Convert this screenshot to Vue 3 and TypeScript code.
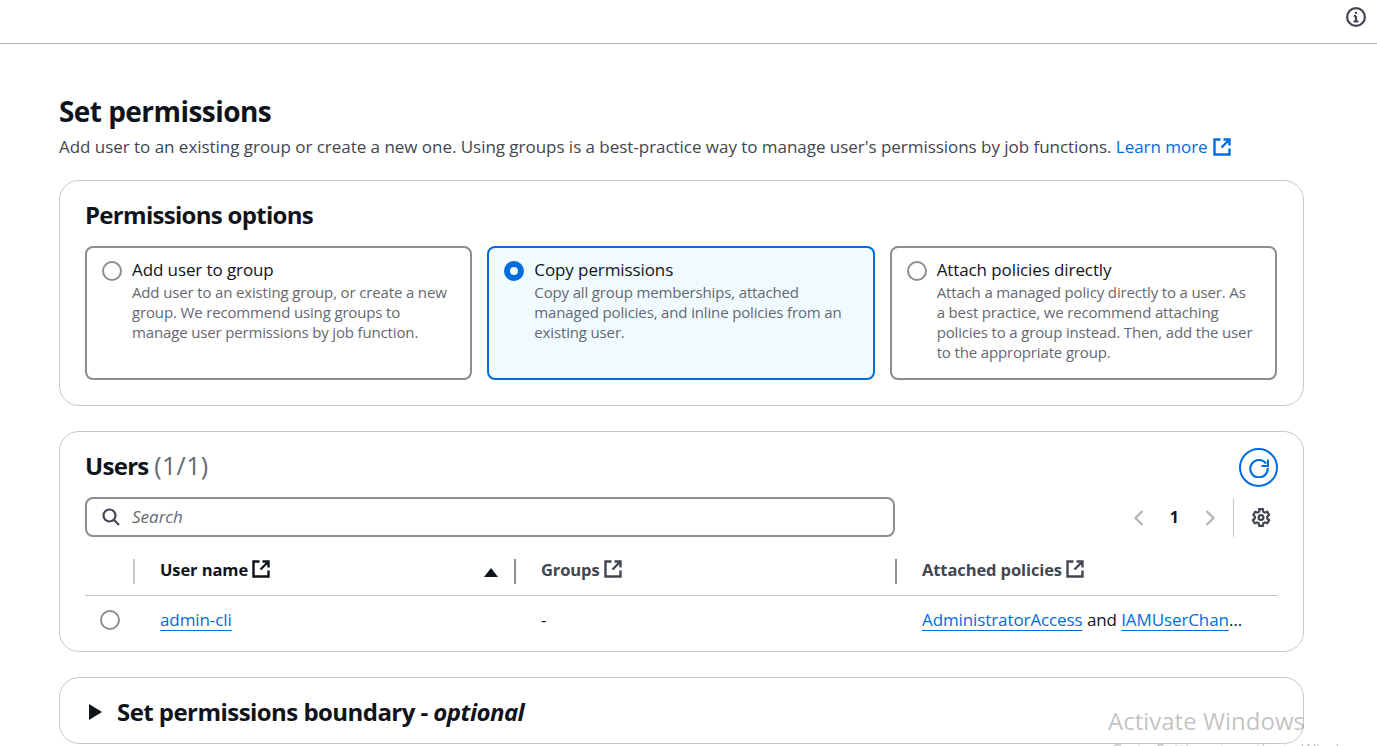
<script setup lang="ts">
interface PermissionOption {
  title: string
  description: string
  selected?: boolean
}

const options: PermissionOption[] = [
  {
    title: 'Add user to group',
    description:
      'Add user to an existing group, or create a new group. We recommend using groups to manage user permissions by job function.',
  },
  {
    title: 'Copy permissions',
    description:
      'Copy all group memberships, attached managed policies, and inline policies from an existing user.',
    selected: true,
  },
  {
    title: 'Attach policies directly',
    description:
      'Attach a managed policy directly to a user. As a best practice, we recommend attaching policies to a group instead. Then, add the user to the appropriate group.',
  },
]
</script>

<template>
  <div class="page">
    <header class="top-bar">
      <svg class="info-icon" viewBox="0 0 20 20" aria-hidden="true">
        <circle cx="10" cy="10" r="8.9" />
        <path d="M10 9v5.5M7.8 9H10M7.5 14.5h5" />
        <path d="M10 4.8v2" />
      </svg>
    </header>

    <main class="content">
      <h1 class="page-title">Set permissions</h1>
      <p class="page-description">
        Add user to an existing group or create a new one. Using groups is a best-practice way to manage user's
        permissions by job functions.
        <a class="link learn-more" href="#">Learn more
          <svg class="external" viewBox="0 0 18 18" aria-hidden="true">
            <path d="M7.5 1.5H1.5v15h15v-6M10.5 1.5h6v6M16 2 8.5 9.5" />
          </svg>
        </a>
      </p>

      <section class="card options-card">
        <h2 class="card-title">Permissions options</h2>
        <div class="options">
          <label v-for="option in options" :key="option.title" class="option" :class="{ selected: option.selected }">
            <span class="radio" />
            <span class="option-text">
              <span class="option-title">{{ option.title }}</span>
              <span class="option-description">{{ option.description }}</span>
            </span>
          </label>
        </div>
      </section>

      <section class="card users-card">
        <div class="users-head">
          <h2 class="card-title users-title">Users <span class="count">(1/1)</span></h2>
          <button class="refresh" type="button" aria-label="Refresh">
            <svg viewBox="0 0 20 20" aria-hidden="true">
              <path d="M17 5.5A8.7 8.7 0 1 0 18.7 10" />
              <path d="M19 1.5V8h-6.5" />
            </svg>
          </button>
        </div>

        <div class="filter-row">
          <div class="search">
            <svg class="search-icon" viewBox="0 0 18 18" aria-hidden="true">
              <circle cx="7.5" cy="7.5" r="6" />
              <path d="m11.8 11.8 5.2 5.2" />
            </svg>
            <span class="search-placeholder">Search</span>
          </div>
          <div class="pagination">
            <svg class="chevron" viewBox="0 0 12 18" aria-hidden="true"><path d="M9.5 2 2.5 9l7 7" /></svg>
            <span class="page-number">1</span>
            <svg class="chevron" viewBox="0 0 12 18" aria-hidden="true"><path d="m2.5 2 7 7-7 7" /></svg>
            <span class="pagination-divider" />
            <svg class="gear" viewBox="0 0 20 20" aria-hidden="true">
              <path d="M8.2 1.2h3.6l.5 2.5 1.6.9 2.4-.8 1.8 3.1-1.9 1.7v1.8l1.9 1.7-1.8 3.1-2.4-.8-1.6.9-.5 2.5H8.2l-.5-2.5-1.6-.9-2.4.8-1.8-3.1 1.9-1.7V8.6L2.4 6.9l1.8-3.1 2.4.8 1.6-.9z" />
              <circle cx="10" cy="9.5" r="2.4" />
            </svg>
          </div>
        </div>

        <div class="table">
          <div class="table-row table-head">
            <div class="cell select-cell" />
            <div class="cell sep sorted">
              User name
              <svg class="external" viewBox="0 0 18 18" aria-hidden="true">
                <path d="M7.5 1.5H1.5v15h15v-6M10.5 1.5h6v6M16 2 8.5 9.5" />
              </svg>
              <span class="sort-arrow" />
            </div>
            <div class="cell sep muted">
              Groups
              <svg class="external" viewBox="0 0 18 18" aria-hidden="true">
                <path d="M7.5 1.5H1.5v15h15v-6M10.5 1.5h6v6M16 2 8.5 9.5" />
              </svg>
            </div>
            <div class="cell sep muted">
              Attached policies
              <svg class="external" viewBox="0 0 18 18" aria-hidden="true">
                <path d="M7.5 1.5H1.5v15h15v-6M10.5 1.5h6v6M16 2 8.5 9.5" />
              </svg>
            </div>
          </div>
          <div class="table-row table-body">
            <div class="cell select-cell"><span class="radio" /></div>
            <div class="cell"><a class="link underlined" href="#">admin-cli</a></div>
            <div class="cell">-</div>
            <div class="cell policies">
              <a class="link underlined" href="#">AdministratorAccess</a> and
              <a class="link underlined" href="#">IAMUserChangePassword</a>
            </div>
          </div>
        </div>
      </section>

      <section class="card boundary-card">
        <span class="caret" />
        <h2 class="boundary-title">Set permissions boundary - <em>optional</em></h2>
      </section>
    </main>

    <div class="activation">
      <div class="activation-title">Activate Windows</div>
      <div class="activation-note">Go to Settings to activate Windows.</div>
    </div>
  </div>
</template>

<style>
html,
body {
  background: #fff;
  height: 100%;
  margin: 0;
  overflow: hidden;
}
</style>

<style scoped>
.page {
  color: #0f141a;
  font-family: 'Open Sans', 'Noto Sans', sans-serif;
  font-size: 17px;
  height: 746px;
  overflow: hidden;
  position: relative;
}

.top-bar {
  align-items: center;
  border-bottom: 1px solid #b4b4bb;
  box-sizing: border-box;
  display: flex;
  height: 44px;
  justify-content: flex-end;
  padding: 0 11px 10px 0;
}

.info-icon {
  fill: none;
  height: 20px;
  stroke: #424650;
  stroke-width: 2.2;
  width: 20px;
}

.content {
  padding: 49px 73px 0 59px;
}

.page-title {
  font-size: 28px;
  font-weight: 700;
  letter-spacing: -0.55px;
  line-height: 36px;
  margin: 0;
}

.page-description {
  color: #424650;
  font-size: 17px;
  letter-spacing: -0.035px;
  line-height: 24px;
  margin: 6px 0 21px;
}

.link {
  color: #006ce0;
  text-decoration: none;
}

.underlined {
  text-decoration: underline;
  text-decoration-thickness: 1px;
  text-underline-offset: 4px;
}

.external {
  fill: none;
  flex: 0 0 auto;
  height: 18px;
  stroke: currentColor;
  stroke-width: 2.4;
  vertical-align: -3px;
  width: 18px;
}

.learn-more .external {
  margin-left: 1px;
}

.card {
  border: 1px solid #c6c6cd;
  border-radius: 20px;
  box-sizing: border-box;
  margin-bottom: 25px;
}

.card-title {
  font-size: 24px;
  font-weight: 700;
  letter-spacing: -0.7px;
  line-height: 30px;
  margin: 0;
}

.options-card {
  height: 226px;
  padding: 19px 26px 0 25px;
}

.options {
  display: grid;
  gap: 15px;
  grid-template-columns: repeat(3, 1fr);
  margin-top: 16px;
}

.option {
  border: 2px solid #8c8c94;
  border-radius: 8px;
  box-sizing: border-box;
  display: flex;
  gap: 10px;
  height: 134px;
  padding: 10px 20px 10px 15px;
}

.option.selected {
  background: #f0fbff;
  border-color: #006ce0;
}

.radio {
  border: 2px solid #8c8c94;
  border-radius: 50%;
  box-sizing: border-box;
  flex: 0 0 auto;
  height: 20px;
  margin-top: 3px;
  width: 20px;
}

.selected .radio {
  border: 6px solid #006ce0;
}

.option-text {
  display: flex;
  flex-direction: column;
}

.option-title {
  font-size: 17px;
  letter-spacing: -0.1px;
  line-height: 24px;
}

.option-description {
  color: #656871;
  font-size: 15px;
  letter-spacing: -0.15px;
  line-height: 20px;
}

.users-card {
  height: 221px;
  padding: 16px 25px 0;
}

.users-head {
  align-items: flex-start;
  display: flex;
  justify-content: space-between;
}

.users-title {
  margin-top: 2px;
}

.count {
  color: #656871;
  font-size: 25px;
  font-weight: 400;
  letter-spacing: 0.4px;
}

.refresh {
  background: #fff;
  border: 2px solid #006ce0;
  border-radius: 50%;
  box-sizing: border-box;
  height: 39px;
  padding: 7.5px;
  width: 39px;
}

.refresh svg {
  display: block;
  fill: none;
  height: 20px;
  stroke: #006ce0;
  stroke-width: 2.2;
  width: 20px;
}

.filter-row {
  align-items: center;
  display: flex;
  justify-content: space-between;
  margin-top: 10px;
}

.search {
  align-items: center;
  border: 2px solid #8c8c94;
  border-radius: 8px;
  box-sizing: border-box;
  display: flex;
  gap: 12px;
  height: 40px;
  padding-left: 15px;
  width: 810px;
}

.search-icon {
  fill: none;
  height: 18px;
  stroke: #424650;
  stroke-width: 2.2;
  width: 18px;
}

.search-placeholder {
  color: #656871;
  font-size: 17px;
  font-style: italic;
  padding-bottom: 2px;
}

.pagination {
  align-items: center;
  display: flex;
  height: 40px;
  padding-right: 7px;
}

.chevron {
  fill: none;
  height: 18px;
  margin-top: 2px;
  stroke: #b4b4bb;
  stroke-width: 2.2;
  width: 12px;
}

.page-number {
  font-size: 16px;
  font-weight: 700;
  padding: 0 25px;
}

.pagination-divider {
  background: #c6c6cd;
  height: 39px;
  margin: 0 17px;
  width: 1px;
}

.gear {
  fill: none;
  height: 20px;
  margin-top: 2px;
  stroke: #424650;
  stroke-width: 2.2;
  width: 20px;
}

.table {
  margin-top: 22px;
}

.table-row {
  display: grid;
  grid-template-columns: 48px 381px 381px 1fr;
}

.table-head {
  border-bottom: 1px solid #c6c6cd;
  color: #424650;
  font-size: 16.5px;
  font-weight: 700;
  height: 37px;
  letter-spacing: -0.1px;
  box-sizing: border-box;
}

.table-head .cell {
  align-items: center;
  box-sizing: border-box;
  display: flex;
  gap: 4px;
  height: 25px;
  padding: 0 0 5px 25px;
  position: relative;
}

.table-head .select-cell {
  padding: 0;
}

.sep {
  border-left: 2px solid #c6c6cd;
}

.sorted {
  color: #0f141a;
}

.muted {
  border-left-color: #8c8c94;
}

.sort-arrow {
  border-bottom: 9px solid #0f141a;
  border-left: 7px solid transparent;
  border-right: 7px solid transparent;
  position: absolute;
  right: 16px;
  top: 9px;
}

.table-body {
  font-size: 17px;
  letter-spacing: -0.1px;
  line-height: 22px;
  padding-top: 13px;
}

.table-body .cell {
  padding-left: 27px;
}

.table-body .select-cell {
  padding: 0 0 0 15px;
}

.table-body .radio {
  display: block;
  margin-top: 1px;
}

.policies {
  overflow: hidden;
  padding-right: 30px;
  text-overflow: ellipsis;
  white-space: nowrap;
}

.boundary-card {
  align-items: center;
  display: flex;
  gap: 15px;
  height: 67px;
  padding: 2px 0 0 29px;
}

.caret {
  border-bottom: 8px solid transparent;
  border-left: 13px solid #0f141a;
  border-top: 8px solid transparent;
}

.boundary-title {
  font-size: 24px;
  font-weight: 700;
  letter-spacing: -0.55px;
  margin: 0;
}

.activation {
  color: rgba(120, 120, 120, 0.45);
  font-family: 'Open Sans', sans-serif;
  left: 1108px;
  pointer-events: none;
  position: absolute;
  top: 703px;
  white-space: nowrap;
}

.activation-title {
  font-size: 24px;
  line-height: 36px;
}

.activation-note {
  font-size: 16px;
  padding-left: 3px;
}
</style>
